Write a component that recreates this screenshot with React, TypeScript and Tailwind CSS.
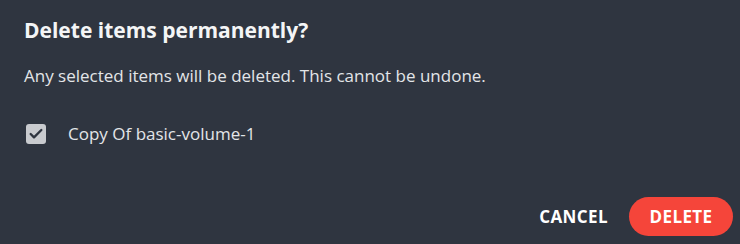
import { Check } from 'lucide-react';

export default function App() {
  return (
    <div
      className="w-[740px] h-[244px] bg-[#2f3540] text-white flex flex-col"
      style={{ fontFamily: '"Open Sans", Lato, sans-serif' }}
    >
      <div className="px-6 pt-[16px]">
        <h2 className="text-[21px] font-bold leading-[28px] text-[#f4f5f6]">Delete items permanently?</h2>
        <p className="mt-[20px] text-[17px] leading-6 text-[#e3e5e8]">
          Any selected items will be deleted. This cannot be undone.
        </p>
        <label className="mt-[34px] flex items-center">
          <span className="ml-[2px] w-5 h-5 rounded-[3px] bg-[#c9cbcf] flex items-center justify-center">
            <Check className="w-4 h-4 text-[#2f3540]" strokeWidth={3.5} />
          </span>
          <span className="ml-[22px] text-[17px] leading-6 text-[#e3e5e8]">Copy Of basic-volume-1</span>
        </label>
      </div>
      <div className="mt-auto flex items-center justify-end gap-[21px] pr-[7px] pb-2">
        <button className="text-[17px] font-bold tracking-[0.4px] text-white">CANCEL</button>
        <button className="w-[104px] h-[39px] rounded-full bg-[#f5453a] text-[17px] font-bold tracking-[0.4px] text-white">
          DELETE
        </button>
      </div>
    </div>
  );
}
